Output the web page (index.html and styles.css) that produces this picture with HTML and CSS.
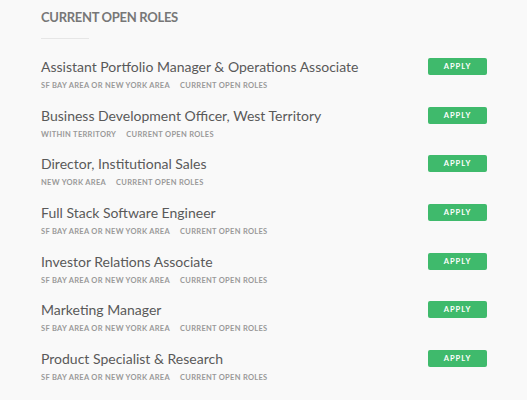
FILE: index.html
```html
<!DOCTYPE html>
<html lang="en">
<head>
    <meta charset="UTF-8">
    <meta name="viewport" content="width=device-width, initial-scale=1.0">
    <title>Careers</title>
    <link rel="stylesheet" href="styles.css">
</head>
<body>

    <section class="roles">
        <h2 class="roles-title">Current Open Roles</h2>
        <hr class="roles-rule">

        <ul class="role-list">
            <li class="role">
                <div class="role-info">
                    <h3 class="role-name">Assistant Portfolio Manager &amp; Operations Associate</h3>
                    <p class="role-meta"><span>SF Bay Area or New York Area</span><span>Current Open Roles</span></p>
                </div>
                <a class="apply" href="#">Apply</a>
            </li>
            <li class="role">
                <div class="role-info">
                    <h3 class="role-name">Business Development Officer, West Territory</h3>
                    <p class="role-meta"><span>Within Territory</span><span>Current Open Roles</span></p>
                </div>
                <a class="apply" href="#">Apply</a>
            </li>
            <li class="role">
                <div class="role-info">
                    <h3 class="role-name">Director, Institutional Sales</h3>
                    <p class="role-meta"><span>New York Area</span><span>Current Open Roles</span></p>
                </div>
                <a class="apply" href="#">Apply</a>
            </li>
            <li class="role">
                <div class="role-info">
                    <h3 class="role-name">Full Stack Software Engineer</h3>
                    <p class="role-meta"><span>SF Bay Area or New York Area</span><span>Current Open Roles</span></p>
                </div>
                <a class="apply" href="#">Apply</a>
            </li>
            <li class="role">
                <div class="role-info">
                    <h3 class="role-name">Investor Relations Associate</h3>
                    <p class="role-meta"><span>SF Bay Area or New York Area</span><span>Current Open Roles</span></p>
                </div>
                <a class="apply" href="#">Apply</a>
            </li>
            <li class="role">
                <div class="role-info">
                    <h3 class="role-name">Marketing Manager</h3>
                    <p class="role-meta"><span>SF Bay Area or New York Area</span><span>Current Open Roles</span></p>
                </div>
                <a class="apply" href="#">Apply</a>
            </li>
            <li class="role">
                <div class="role-info">
                    <h3 class="role-name">Product Specialist &amp; Research</h3>
                    <p class="role-meta"><span>SF Bay Area or New York Area</span><span>Current Open Roles</span></p>
                </div>
                <a class="apply" href="#">Apply</a>
            </li>
        </ul>
    </section>

</body>
</html>
```

FILE: styles.css
```css
/* Global Styles */
body {
    font-family: 'Lato', 'Open Sans', sans-serif;
    margin: 0;
    padding: 0;
    background-color: #f9f9f9;
    color: #555;
}

/* Section */
.roles {
    padding: 9px 40px 0 41px;
}

.roles-title {
    margin: 0;
    font-size: 13px;
    line-height: 16px;
    font-weight: 700;
    letter-spacing: -0.3px;
    text-transform: uppercase;
    color: #777;
}

.roles-rule {
    width: 48px;
    margin: 13px 0 0;
    border: none;
    border-top: 1px solid #e6e6e6;
}

/* Role list */
.role-list {
    list-style: none;
    margin: 19px 0 0;
    padding: 0;
}

.role {
    display: flex;
    justify-content: space-between;
    align-items: flex-start;
    height: 48.67px;
}

.role-name {
    margin: 0;
    font-size: 14px;
    line-height: 18px;
    font-weight: 400;
    color: #595959;
}

.role-meta {
    display: flex;
    gap: 10px;
    margin: 5px 0 0;
    font-size: 7.5px;
    line-height: 9px;
    font-weight: 700;
    letter-spacing: 0.3px;
    text-transform: uppercase;
    color: #999;
}

/* Apply button */
.apply {
    display: block;
    width: 59px;
    height: 17px;
    line-height: 17px;
    background-color: #3fba6c;
    border-radius: 2px;
    color: #fff;
    text-align: center;
    text-decoration: none;
    text-transform: uppercase;
    font-size: 7.5px;
    font-weight: 700;
    letter-spacing: 1px;
}

.apply:hover {
    background-color: #35a35d;
}
```
